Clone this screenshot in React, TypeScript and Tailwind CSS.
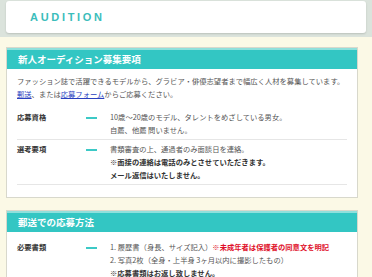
import React from 'react';

const font = { fontFamily: '"Noto Sans CJK JP", "Noto Sans", sans-serif' };

type Row = { label: string; lines: React.ReactNode[] };

const Dash = () => <span className="mt-[6px] block h-[2px] w-[11px] shrink-0 bg-[#3cc9c6]" />;

const InfoRow = ({ row, last }: { row: Row; last?: boolean }) => (
  <div className={`flex pt-[3px] pb-[2px] ${last ? '' : 'border-b border-[#e6e6e6]'}`}>
    <div className="w-[69px] shrink-0 font-bold text-[#333]">{row.label}</div>
    <Dash />
    <div className="ml-[13px] text-[#555]">
      {row.lines.map((l, i) => (
        <div key={i}>{l}</div>
      ))}
    </div>
  </div>
);

const Section = ({ title, children }: { title: string; children: React.ReactNode }) => (
  <section className="border border-[#d8d8cc] bg-white">
    <h2 className="h-[21px] border-t-2 border-[#8fe0dc] bg-[#33c6c3] pl-[11px] text-[9.5px] font-bold leading-[19px] text-white">
      {title}
    </h2>
    <div className="px-[10px] pt-[6px] pb-[12px] text-[7.3px] leading-[13px]">{children}</div>
  </section>
);

export default function App() {
  const rows1: Row[] = [
    {
      label: '応募資格',
      lines: ['10歳〜20歳のモデル、タレントをめざしている男女。', '自薦、他薦 問いません。'],
    },
    {
      label: '選考要項',
      lines: [
        '書類審査の上、通過者のみ面談日を連絡。',
        <b className="text-[#333]">※面接の連絡は電話のみとさせていただきます。</b>,
        <b className="text-[#333]">メール返信はいたしません。</b>,
      ],
    },
  ];

  const rows2: Row[] = [
    {
      label: '必要書類',
      lines: [
        <>
          1. 履歴書（身長、サイズ記入）<b className="text-[#e0102a]">※未成年者は保護者の同意文を明記</b>
        </>,
        '2. 写真2枚（全身・上半身 3ヶ月以内に撮影したもの）',
        <b className="text-[#333]">※応募書類はお返し致しません。</b>,
      ],
    },
  ];

  return (
    <div className="h-[277px] w-[372px] overflow-hidden bg-[#fbf9e6]" style={font}>
      <header className="h-[37px] bg-[#dbe3dc] px-[6px] pt-[1px]">
        <div className="flex h-[32px] items-center rounded-[3px] bg-white pl-[24px] shadow-[0_1px_2px_rgba(0,0,0,0.15)]">
          <span
            className="text-[11px] font-bold tracking-[2.7px] text-[#3bbdbb]"
            style={{ fontFamily: '"Liberation Sans", Arial, sans-serif' }}
          >
            AUDITION
          </span>
        </div>
      </header>

      <main className="flex w-[358px] flex-col gap-[12px] pl-[6px] pt-[10px]">
        <Section title="新人オーディション募集要項">
          <p className="mb-[7px] text-[#555]">
            ファッション誌で活躍できるモデルから、グラビア・俳優志望者まで幅広く人材を募集しています。
            <br />
            <a className="text-[#2a3fbf] underline">郵送</a>、または
            <a className="text-[#2a3fbf] underline">応募フォーム</a>からご応募ください。
          </p>
          {rows1.map((r, i) => (
            <InfoRow key={i} row={r} />
          ))}
        </Section>

        <Section title="郵送での応募方法">
          {rows2.map((r, i) => (
            <InfoRow key={i} row={r} last />
          ))}
        </Section>
      </main>
    </div>
  );
}
